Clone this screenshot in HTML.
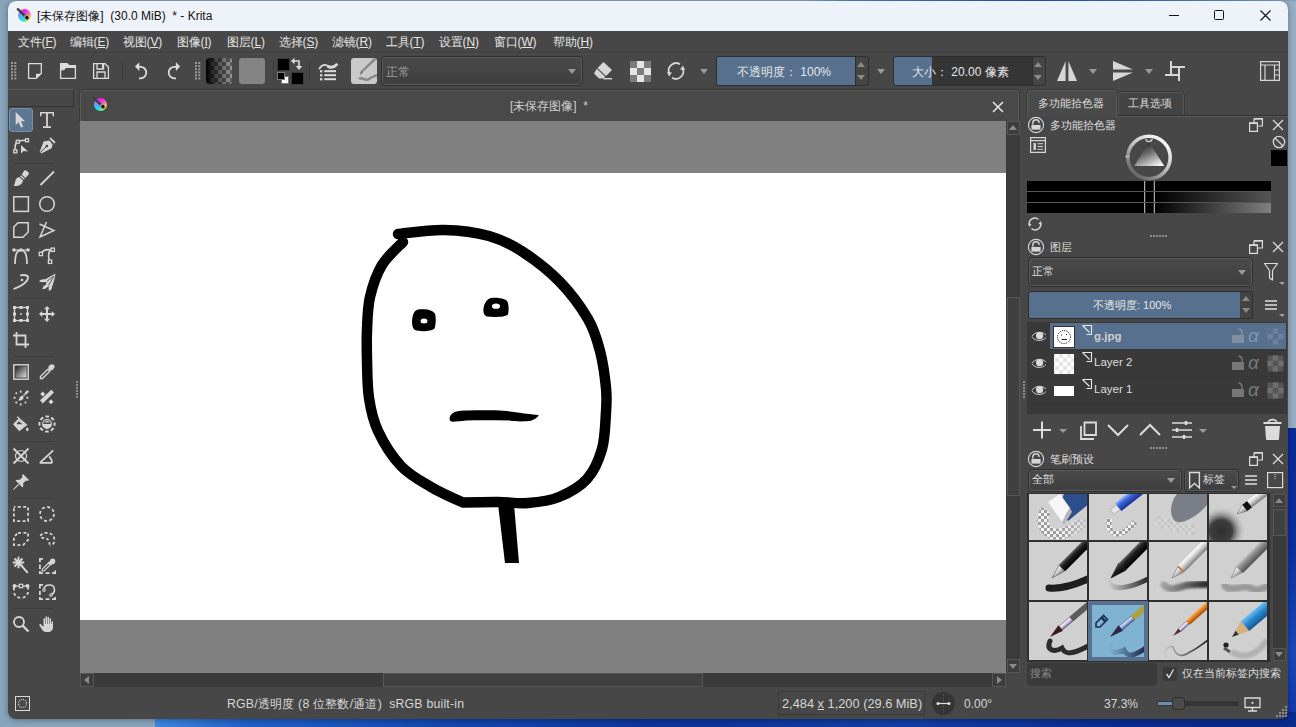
<!DOCTYPE html>
<html><head><meta charset="utf-8">
<style>
*{box-sizing:border-box;margin:0;padding:0}
html,body{width:1296px;height:727px;overflow:hidden}
body{position:relative;font-family:"Liberation Sans",sans-serif;font-size:12px;color:#dcdcdc;background:#8eabc6}
.a{position:absolute}
svg{position:absolute;overflow:visible}
.mi{position:absolute;top:34px;font-size:12px;color:#e4e4e4;white-space:nowrap;letter-spacing:-0.2px}
.ic{fill:none;stroke:#d8d8d8;stroke-width:1.5}
.icf{fill:#d8d8d8;stroke:none}
.sep{position:absolute;width:1px;background:#3d3d3d}
.combo{position:absolute;border:1px solid #2e2e2e;border-radius:4px;background:linear-gradient(#4a4a4a,#3e3e3e);box-shadow:inset 0 0 0 1px #5a5a5a}
.tri{position:absolute;width:0;height:0;border-left:4px solid transparent;border-right:4px solid transparent;border-top:5px solid #9a9a9a}
.triu{position:absolute;width:0;height:0;border-left:4px solid transparent;border-right:4px solid transparent;border-bottom:5px solid #9a9a9a}
.txt{position:absolute;white-space:nowrap;color:#dedede;font-size:12px}
</style></head><body>
<!-- wallpaper bloom -->
<div class="a" style="left:0;top:0;width:1296px;height:727px;background:linear-gradient(90deg,#88a5bc 0%,#8fa9c0 50%,#98afc5 100%)"></div>
<div class="a" style="left:1230px;top:428px;width:80px;height:300px;background:linear-gradient(180deg,#0a2a98 0%,#0c2f9e 40%,#1a48b8 75%,#0e35a6 100%)"></div>
<div class="a" style="left:155px;top:712px;width:1141px;height:20px;background:linear-gradient(90deg,#3c88e0 0%,#1f62c8 8%,#1248b0 25%,#0c349a 45%,#123ea6 65%,#0a2c90 85%,#0a2a8c 100%)"></div>
<div class="a" style="left:0;top:0;width:1296px;height:1px;background:linear-gradient(90deg,#8aa3bb 0%,#8aa3bb 62%,#3f86d0 66%,#1a5ab8 80%,#3a7acc 90%,#8aa3bb 100%)"></div>
<!-- window -->
<div class="a" style="left:8px;top:1px;width:1280px;height:718px;background:#474747;border-radius:8px;overflow:hidden;box-shadow:0 1px 6px rgba(0,0,0,0.35)">
  <div class="a" style="left:0;top:0;width:1280px;height:30px;background:#eef2f9"></div>
</div>
<!-- title -->
<div class="a" style="left:17.5px;top:8.5px;width:13px;height:13px;border-radius:50%;background:radial-gradient(circle at 45% 60%,rgba(90,150,240,0.85) 0%,rgba(90,150,240,0.3) 35%,rgba(90,150,240,0) 60%),conic-gradient(from 0deg,#ff10f0 0deg,#ff50c0 50deg,#ff9a70 85deg,#ffe030 125deg,#c0ff40 150deg,#40ffa0 185deg,#10f8ff 220deg,#70a0ff 270deg,#b060ff 310deg,#ff10f0 360deg)"></div>
<svg style="left:17px;top:8px" width="14" height="14" viewBox="0 0 14 14"><path d="M0.8 1.2 L8.5 8.3" stroke="#3c3c3c" stroke-width="2.4" stroke-linecap="round"/><path d="M7.6 7.5 L9.2 9" stroke="#aaa" stroke-width="2"/><ellipse cx="10" cy="9.7" rx="1.6" ry="1.9" transform="rotate(-40 10 9.7)" fill="#111"/></svg>
<div class="txt" style="left:37px;top:8px;color:#111;font-size:12px">[未保存图像]&nbsp; (30.0 MiB)&nbsp; * - Krita</div>
<svg style="left:1169px;top:15px" width="10" height="1"><rect x="0" y="0" width="10" height="1" fill="#111"/></svg>
<div class="a" style="left:1214px;top:10px;width:10px;height:10px;border:1px solid #111;border-radius:1.5px"></div>
<svg style="left:1259.5px;top:9.5px" width="11" height="11" viewBox="0 0 11 11"><path d="M0.5 0.5 L10.5 10.5 M10.5 0.5 L0.5 10.5" stroke="#111" stroke-width="1.1"/></svg>
<!-- menu -->
<span class="mi" style="left:18px">文件(<u>F</u>)</span>
<span class="mi" style="left:70px">编辑(<u>E</u>)</span>
<span class="mi" style="left:123px">视图(<u>V</u>)</span>
<span class="mi" style="left:177px">图像(<u>I</u>)</span>
<span class="mi" style="left:227px">图层(<u>L</u>)</span>
<span class="mi" style="left:279px">选择(<u>S</u>)</span>
<span class="mi" style="left:332px">滤镜(<u>R</u>)</span>
<span class="mi" style="left:386px">工具(<u>T</u>)</span>
<span class="mi" style="left:439px">设置(<u>N</u>)</span>
<span class="mi" style="left:494px">窗口(<u>W</u>)</span>
<span class="mi" style="left:553px">帮助(<u>H</u>)</span>
<div class="a" style="left:8px;top:52px;width:1280px;height:1px;background:#3e3e3e"></div>
<div class="a" style="left:8px;top:53px;width:1280px;height:1px;background:#4c4c4c"></div>

<!-- toolbar -->
<svg style="left:0;top:0" width="1296" height="90">
 <g fill="#9a9a9a">
  <rect x="11" y="62" width="2" height="2"/><rect x="14.3" y="62" width="2" height="2"/>
  <rect x="11" y="65.1" width="2" height="2"/><rect x="14.3" y="65.1" width="2" height="2"/>
  <rect x="11" y="68.2" width="2" height="2"/><rect x="14.3" y="68.2" width="2" height="2"/>
  <rect x="11" y="71.3" width="2" height="2"/><rect x="14.3" y="71.3" width="2" height="2"/>
  <rect x="11" y="74.4" width="2" height="2"/><rect x="14.3" y="74.4" width="2" height="2"/>
  <rect x="11" y="77.5" width="2" height="2"/><rect x="14.3" y="77.5" width="2" height="2"/>
  <rect x="195" y="62" width="2" height="2"/><rect x="198.3" y="62" width="2" height="2"/>
  <rect x="195" y="65.1" width="2" height="2"/><rect x="198.3" y="65.1" width="2" height="2"/>
  <rect x="195" y="68.2" width="2" height="2"/><rect x="198.3" y="68.2" width="2" height="2"/>
  <rect x="195" y="71.3" width="2" height="2"/><rect x="198.3" y="71.3" width="2" height="2"/>
  <rect x="195" y="74.4" width="2" height="2"/><rect x="198.3" y="74.4" width="2" height="2"/>
  <rect x="195" y="77.5" width="2" height="2"/><rect x="198.3" y="77.5" width="2" height="2"/>
 </g>
 <g fill="none" stroke="#dcdcdc" stroke-width="1.3">
  <!-- new -->
  <path d="M28.6 63.6 H41.3 V73.5 L36 78.4 H28.6 Z"/>
  <!-- open -->
  <path d="M60.6 63.6 H67 L69 65.6 H75.4 V78.4 H60.6 Z"/>
  <!-- save -->
  <path d="M93.6 63.6 H105 L108.4 67 V78.4 H93.6 Z M97 63.6 V69 H103.6 V63.6 M97 78.4 V72 H105 V78.4"/>
 </g>
 <path d="M36 78.4 V73.8 H41.3 Z" fill="#dcdcdc"/>
 <path d="M60.6 63.6 H67 L69 65.6 H75.4 V68 H66 L64 70.2 H60.6 Z" fill="#dcdcdc"/>
 <rect x="102" y="64" width="2" height="4.5" fill="#dcdcdc"/>
 <!-- undo/redo -->
 <g fill="none" stroke="#dcdcdc" stroke-width="1.8">
  <path d="M138 66.8 H140.5 A5.8 5.8 0 0 1 140.5 78.4 H139"/>
  <path d="M177 66.8 H174.5 A5.8 5.8 0 0 0 174.5 78.4 H176"/>
 </g>
 <path d="M135 66.6 L139.3 62.3 V70.9 Z" fill="#dcdcdc"/>
 <path d="M180.2 66.6 L175.9 62.3 V70.9 Z" fill="#dcdcdc"/>
 <rect x="122" y="61" width="1" height="20" fill="#3c3c3c"/>
 <rect x="273" y="61" width="1" height="20" fill="#3c3c3c"/>
 <rect x="309" y="61" width="1" height="20" fill="#3c3c3c"/>
</svg>
<!-- gradient swatch -->
<div class="a" style="left:206px;top:58px;width:26px;height:26px;border-radius:3px;overflow:hidden;background-color:#9a9a9a;background-image:linear-gradient(45deg,#5a5a5a 25%,transparent 25%,transparent 75%,#5a5a5a 75%),linear-gradient(45deg,#5a5a5a 25%,transparent 25%,transparent 75%,#5a5a5a 75%);background-size:8px 8px;background-position:0 0,4px 4px">
 <div class="a" style="left:0;top:0;width:26px;height:26px;background:linear-gradient(90deg,#000 0%,rgba(0,0,0,0.6) 35%,rgba(0,0,0,0) 100%)"></div>
</div>
<div class="a" style="left:239px;top:58px;width:26px;height:26px;border-radius:3px;background:#848484"></div>
<!-- fg/bg -->
<div class="a" style="left:277px;top:58px;width:13px;height:13px;background:#000;border:1px solid #3a3a3a"></div>
<div class="a" style="left:291px;top:72px;width:13px;height:13px;background:#000;border:1px solid #3a3a3a"></div>
<div class="a" style="left:281px;top:76px;width:8px;height:8px;background:#fff;border:1px solid #777"></div>
<div class="a" style="left:277px;top:72px;width:8px;height:8px;background:#000;border:1px solid #777"></div>
<svg style="left:290px;top:57px" width="14" height="14" viewBox="0 0 14 14">
 <path d="M3 4 H9 V9" fill="none" stroke="#dcdcdc" stroke-width="1.6"/>
 <path d="M1 4 L4.5 0.8 V7.2 Z M9 13 L5.8 9 H12.2 Z" fill="#dcdcdc"/>
</svg>
<!-- brush settings icon -->
<svg style="left:317px;top:61px" width="22" height="20" viewBox="0 0 22 20">
 <path d="M2.5 7.5 C5 3.8 7.5 3 10.5 4.8 C13 6.3 16 6.8 19.5 3.5" fill="none" stroke="#d8d8d8" stroke-width="1.8" stroke-linecap="round"/>
 <path d="M11.5 5.6 C14 6.8 16.8 6.6 19.5 3.8" fill="none" stroke="#d8d8d8" stroke-width="3" stroke-linecap="round"/>
 <g fill="#dcdcdc"><rect x="3" y="9.2" width="2.4" height="2.2"/><rect x="7.3" y="9.2" width="11.7" height="2"/>
 <rect x="3" y="13.2" width="2.4" height="2.2"/><rect x="7.3" y="13.2" width="11.7" height="2"/>
 <rect x="3" y="17.2" width="2.4" height="2.2"/><rect x="7.3" y="17.2" width="11.7" height="2"/></g>
</svg>
<div class="a" style="left:351px;top:58px;width:26px;height:26px;border-radius:3px;background:#c9c9c9;overflow:hidden">
 <svg style="left:0;top:0" width="26" height="26" viewBox="0 0 26 26">
  <path d="M26 1 L12 14 L10 13 L24 -1 Z" fill="#8a8a8a"/>
  <path d="M12 14 L9 17 L10 13 Z" fill="#555"/>
  <path d="M8 21 C11 18 14 24 18 21 C21 19 24 18 26 17" fill="none" stroke="#888" stroke-width="2.5"/>
 </svg>
</div>
<!-- blend combo -->
<div class="combo" style="left:381px;top:56px;width:202px;height:30px"></div>
<div class="txt" style="left:386px;top:64px;color:#9a9a9a">正常</div>
<div class="tri" style="left:568px;top:69px"></div>
<!-- eraser -->
<svg style="left:593px;top:61px" width="22" height="20" viewBox="0 0 22 20">
 <path d="M10.5 1 L19 9 L13 15 L4.5 7 Z" fill="#d6d6d6"/>
 <path d="M3.8 7.8 L12.2 15.8 L10.8 17.4 H6 L1 12.5 Z" fill="#d6d6d6"/>
 <rect x="10.5" y="17" width="8.5" height="1.4" fill="#d6d6d6"/>
</svg>
<!-- alpha checker -->
<div class="a" style="left:630px;top:61px;width:21px;height:21px;background:#e6e6e6">
 <div class="a" style="left:0;top:0;width:7px;height:7px;background:#7c7c7c"></div>
 <div class="a" style="left:14px;top:0;width:7px;height:7px;background:#7c7c7c"></div>
 <div class="a" style="left:7px;top:7px;width:7px;height:7px;background:#7c7c7c"></div>
 <div class="a" style="left:0;top:14px;width:7px;height:7px;background:#7c7c7c"></div>
 <div class="a" style="left:14px;top:14px;width:7px;height:7px;background:#7c7c7c"></div>
</div>
<!-- reload -->
<svg style="left:666px;top:61px" width="20" height="20" viewBox="0 0 20 20">
 <path d="M3.5 13 A7.5 7.5 0 0 1 14 3.2" fill="none" stroke="#d6d6d6" stroke-width="1.8"/>
 <path d="M16.5 7 A7.5 7.5 0 0 1 6 16.8" fill="none" stroke="#d6d6d6" stroke-width="1.8"/>
 <path d="M1 11 L6 11.5 L3 15.5 Z M19 9 L14 8.5 L17 4.5 Z" fill="#d6d6d6"/>
</svg>
<div class="tri" style="left:700px;top:69px"></div>
<!-- opacity slider -->
<div class="a" style="left:716px;top:56px;width:153px;height:30px;border:1px solid #2e2e2e;border-radius:3px;background:#3a3a3a;overflow:hidden">
 <div class="a" style="left:0;top:0;width:138px;height:28px;background:#56708e"></div>
 <div class="a" style="left:138px;top:0;width:14px;height:28px;background:#454545;border-left:1px solid #2e2e2e"></div>
</div>
<div class="triu" style="left:857px;top:62px;border-bottom-color:#8a8a8a"></div>
<div class="tri" style="left:857px;top:75px;border-top-color:#8a8a8a"></div>
<div class="txt" style="left:737px;top:64px;color:#e6e6e6">不透明度：&nbsp;100%</div>
<div class="tri" style="left:877px;top:69px"></div>
<!-- size slider -->
<div class="a" style="left:893px;top:56px;width:153px;height:30px;border:1px solid #2e2e2e;border-radius:3px;background:#353535;overflow:hidden">
 <div class="a" style="left:0;top:0;width:38px;height:28px;background:#56708e"></div>
 <div class="a" style="left:138px;top:0;width:14px;height:28px;background:#454545;border-left:1px solid #2e2e2e"></div>
</div>
<div class="triu" style="left:1034px;top:62px;border-bottom-color:#8a8a8a"></div>
<div class="tri" style="left:1034px;top:75px;border-top-color:#8a8a8a"></div>
<div class="txt" style="left:912px;top:64px;color:#e6e6e6">大小：&nbsp;20.00 像素</div>
<!-- mirror -->
<svg style="left:1056px;top:60px" width="22" height="22" viewBox="0 0 22 22">
 <path d="M9.6 1 V21 H1 Z M12.4 1 V21 H21 Z" fill="#d6d6d6"/>
</svg>
<div class="tri" style="left:1089px;top:69px"></div>
<svg style="left:1112px;top:60px" width="22" height="22" viewBox="0 0 22 22">
 <path d="M1 1 L21 9.6 H1 Z M1 12.4 H21 L1 21 Z" fill="#d6d6d6"/>
</svg>
<div class="tri" style="left:1145px;top:69px"></div>
<!-- wrap -->
<svg style="left:1164px;top:60px" width="22" height="22" viewBox="0 0 22 22">
 <path d="M7 1 V15 M7 7 H21 M1 15 H15 M15 7 V21" fill="none" stroke="#d6d6d6" stroke-width="2"/>
</svg>
<!-- workspace -->
<svg style="left:1259px;top:60px" width="22" height="22" viewBox="0 0 22 22">
 <path d="M1.6 1.6 H20.4 V20.4 H1.6 Z M1.6 5 H20.4 M6 5 V20.4 M15.5 5 V20.4 M15.5 10 H20.4 M15.5 15 H20.4" fill="none" stroke="#d6d6d6" stroke-width="1.2"/>
</svg>
<!-- toolbox -->
<div class="a" style="left:8px;top:89px;width:66px;height:18px;border-top:1px solid #585858;border-right:1px solid #333;border-bottom:1px solid #333;background:#474747"></div>
<div class="a" style="left:9px;top:108px;width:24px;height:24px;border-radius:3px;background:#5d7793;border:1px solid #7590ab"></div>
<svg style="left:0;top:0" width="80" height="640">
 <g fill="#3c3c3c">
  <rect x="14" y="163" width="40" height="1"/><rect x="14" y="298" width="40" height="1"/>
  <rect x="14" y="356" width="40" height="1"/><rect x="14" y="441" width="40" height="1"/>
  <rect x="14" y="498" width="40" height="1"/><rect x="14" y="608" width="40" height="1"/>
 </g>
 <g fill="#8c8c8c"><rect x="76" y="381" width="2" height="2"/><rect x="76" y="384" width="2" height="2"/><rect x="76" y="387" width="2" height="2"/><rect x="76" y="390" width="2" height="2"/><rect x="76" y="393" width="2" height="2"/><rect x="76" y="396" width="2" height="2"/></g>
 <g fill="#d6d6d6" stroke="none">
  <!-- select arrow -->
  <path transform="translate(13,112)" d="M2.7 0 V13 L5.6 10.2 L8 15.6 L10.3 14.6 L7.9 9.3 H12 Z"/>
  <!-- T -->
  <path transform="translate(39,112)" d="M1 0 H15 V4.2 H13.6 V1.6 H8.9 V14.3 H12 V16 H4 V14.3 H7.1 V1.6 H2.4 V4.2 H1 Z"/>
  <!-- brush -->
  <path transform="translate(13,170)" d="M11.5 0.2 C13 -0.3 16.5 2.5 16 4 L12.5 8 L8.7 4.5 Z M8 5.3 L11.8 8.8 L10.8 9.8 L7 6.3 Z M6.3 7 L10 10.5 C9.5 14 6 16.5 0.5 16 C2.5 14.5 1.5 11 3.5 8.6 C4.4 7.6 5.3 7.2 6.3 7 Z"/>
  <!-- multibrush -->
  <path d="M55.5 273.5 L54.5 279 L52.3 286.5 L50 286 L47.5 287 L45.8 285.5 L46.5 282.5 L44.8 281.5 L44.5 279.8 Z"/>
  <path d="M47 281.3 L53.8 276 M48.3 285.5 L53.8 276.5" stroke="#474747" stroke-width="0.9" fill="none"/>
  <path d="M45.5 279.6 C43.5 278.6 40.5 279.3 39 281.3 C41.5 282.5 44 282.6 46 281.6 Z"/>
  <path d="M46.5 284.8 C44.3 285 42.8 286.5 42.3 289.3 C44.8 289.2 46.8 288.2 47.8 286.2 Z"/>
  <path d="M50 285.6 C48.5 286.5 48.2 288.8 49.2 291 C51 290.2 52.3 288.3 52 286.2 Z"/>
  <!-- move arrows -->
  <path transform="translate(39,306)" d="M8 0 L11 3.2 H9 V7 H12.8 V5 L16 8 L12.8 11 V9 H9 V12.8 H11 L8 16 L5 12.8 H7 V9 H3.2 V11 L0 8 L3.2 5 V7 H7 V3.2 H5 Z"/>
  <!-- pin -->
  <path transform="translate(13,474)" d="M10 0 L16 6 L14.5 7 L13 6.5 L10 9.5 C10.5 11 10.5 12.5 9.5 13.5 L2.5 6.5 C3.5 5.5 5 5.5 6.5 6 L9.5 3 L9 1.5 Z M5 10 L6 11 L0.5 16 L0 15.5 Z"/>
  <!-- hand -->
  <path transform="translate(39,616)" d="M4.5 3 C4.5 2 6 2 6 3 V8 H6.5 V1 C6.5 0 8 0 8 1 V8 H8.5 V1.5 C8.5 0.5 10 0.5 10 1.5 V8 H10.5 V3 C10.5 2 12 2 12 3 V8 H12.5 V6 C12.5 5 14 5 14 6 V11 C14 14 12 16 9 16 H7 C5 16 4 15 3 13.5 L0.5 9.5 C0 8.5 1 7.5 2 8.5 L4.5 11 Z"/>
 </g>
 <g fill="none" stroke="#d6d6d6" stroke-width="1.5">
  <!-- edit shapes -->
  <path transform="translate(13,138)" d="M2 13 C2 8 2 4.5 5 3.5 C8 2.5 11 2.3 13.5 2.3"/>
  <rect transform="translate(13,138)" x="0.8" y="11.8" width="3" height="3" fill="#474747" stroke-width="1.3"/>
  <rect transform="translate(13,138)" x="3.3" y="2.2" width="3" height="3" fill="#474747" stroke-width="1.3"/>
  <rect transform="translate(13,138)" x="12.5" y="0.8" width="3" height="3" fill="#474747" stroke-width="1.3"/>
  <path transform="translate(13,138)" d="M8 7 V15.5 L10.5 13 L15 13.5 Z" fill="#d6d6d6" stroke="none"/>
  <!-- line -->
  <path d="M40.5 185 L54 171.5" stroke-width="1.8"/>
  <!-- rect -->
  <rect x="13.8" y="196.8" width="14.6" height="14.6"/>
  <!-- ellipse -->
  <circle cx="47" cy="204" r="7.3"/>
  <!-- polygon -->
  <path transform="translate(13,222)" d="M5 0.8 H15.2 V10 L10 15.2 H0.8 V5 Z"/>
  <!-- polyline -->
  <path transform="translate(39,222)" d="M0.5 2 L15 8.5 L1 15 L7.5 0"/>
  <!-- bezier -->
  <path transform="translate(13,248)" d="M2 16 C2 6 4 2 8 2 C12 2 14 6 14 16" stroke-width="1.8"/>
  <path transform="translate(13,248)" d="M0 2 H16" stroke-width="1"/>
  <circle cx="14" cy="250" r="1.8" fill="#d6d6d6" stroke="none"/><circle cx="21" cy="250" r="1.8" fill="#d6d6d6" stroke="none"/><circle cx="28" cy="250" r="1.8" fill="#d6d6d6" stroke="none"/>
  <!-- freehand path -->
  <path d="M40.8 253.9 C42.5 250.5 46.5 249.2 50.5 249.8 C48.2 252.5 47.8 257.5 50.1 261.8" stroke-width="1.6"/>
  <rect x="39.2" y="252.3" width="3.3" height="3.3" fill="#474747" stroke-width="1.3"/>
  <rect x="51.1" y="248.1" width="3.3" height="3.3" fill="#474747" stroke-width="1.3"/>
  <rect x="48.4" y="260.1" width="3.3" height="3.3" fill="#474747" stroke-width="1.3"/>
  <!-- freehand (col1,282) -->
  <path transform="translate(13,274)" d="M0.5 15 C6 13.5 14 9 15 4 C15.5 1 11 0.5 7 1.5" stroke-width="1.8"/>
  <circle cx="22" cy="280" r="1.3" fill="#d6d6d6" stroke="none"/>
  <!-- transform -->
  <rect x="14.5" y="307.5" width="13" height="13" stroke-width="1.3"/>
  <circle cx="21" cy="314" r="1" fill="#d6d6d6" stroke="none"/>
  <g fill="#d6d6d6" stroke="none"><rect x="13" y="306" width="3" height="3"/><rect x="19.5" y="306" width="3" height="3"/><rect x="26" y="306" width="3" height="3"/><rect x="13" y="312.5" width="3" height="3"/><rect x="26" y="312.5" width="3" height="3"/><rect x="13" y="319" width="3" height="3"/><rect x="19.5" y="319" width="3" height="3"/><rect x="26" y="319" width="3" height="3"/></g>
  <!-- crop -->
  <path transform="translate(13,332)" d="M3.5 0 V12.5 H16 M0 3.5 H12.5 V16" stroke-width="1.8"/>
  <!-- gradient -->
  <rect x="13.8" y="364.8" width="14.4" height="14.4" stroke-width="1.4"/>
  <!-- color picker -->
  <path transform="translate(39,364)" d="M9 5 L1.5 12.5 V14.5 H3.5 L11 7" stroke-width="1.4"/>
  <path transform="translate(39,364)" d="M8.3 5.5 L10.5 7.7 L12 6.2 C13 6.5 14 6 14.2 5 L15.2 4 C16 3 15.5 1 14.5 0.8 C13.5 0 12 0 11 1 L9.8 2.2 C9 2.5 9 3.5 9.8 4 Z" fill="#d6d6d6" stroke="none"/>
  <!-- assistant -->
  <circle cx="21" cy="456" r="5.5" stroke-width="1.2"/>
  <path d="M13.5 448.5 L28.5 463.5 M28.5 448.5 L13.5 463.5" stroke-width="1.8"/>
  <!-- measure -->
  <path d="M39.8 462.8 L53.2 450.3 M39.8 462.8 H52.2 M49.2 456.3 C51 458.3 52.1 460.5 52.2 462.8" stroke-width="1.8"/>
  <!-- selections -->
  <rect x="13.9" y="506.9" width="14.2" height="14.2" stroke-width="1.8" stroke-dasharray="3 2.4" stroke-dashoffset="1.5"/>
  <circle cx="47" cy="514" r="7" stroke-width="1.8" stroke-dasharray="3 2.5"/>
  <path d="M18 532.9 H28.1 V540 L23 545.1 H13.9 V537 Z" stroke-width="1.8" stroke-dasharray="3 2.4"/>
  <path d="M40.5 536 C42 533 46 532 50 533.5 C54 535 55 539 54 542.5 C53.3 544.5 51.5 545.5 50.5 545.8" stroke-width="1.8" stroke-dasharray="3 2.2"/>
  <path d="M41.5 538 C44.5 537.5 48 538.5 49 541 C49.8 543 49.5 544.5 48.8 545.5" stroke-width="1.8" stroke-dasharray="2.6 2.2"/>
  <path d="M19.5 563.5 L27.8 572.8" stroke-width="2"/>
  <path d="M18.5 556.8 V568.2 M12.8 562.5 H24.2 M14.5 558.5 L22.5 566.5 M22.5 558.5 L14.5 566.5" stroke-width="2"/>
  <path d="M39.9 562 V558.9 H43 M39.9 564.5 V569 M39.9 571 V573.1 H43 M45.5 573.1 H49.5 M52 573.1 H55.1 V570.5" stroke-width="1.8"/>
  <path d="M48.5 563 L42.3 569.2 V571 H44 L50.3 564.7 Z" stroke-width="1.2"/>
  <path d="M47.8 562.2 L51 565.4 L52.2 564.2 C53.3 564.4 54.3 564 54.8 563 C55.6 561.8 55.5 560 54.5 559.2 C53.5 558.3 52 558.3 51 559 C50.2 559.5 49.9 560.5 50 561.2 Z" fill="#d6d6d6" stroke="none"/>
  <path d="M13.9 587.5 V591 C13.9 595 16.8 597.9 21 597.9 C25.2 597.9 28.1 595 28.1 591 V587.5" stroke-width="1.8" stroke-dasharray="3 2.4"/>
  <path d="M13.5 586 H28.5" stroke-width="1.3"/>
  <circle cx="14.5" cy="586" r="2" fill="#d6d6d6" stroke="none"/><circle cx="27.5" cy="586" r="2" fill="#d6d6d6" stroke="none"/><rect x="19.3" y="584.3" width="3.4" height="3.4" fill="#474747" stroke-width="1.2"/>
  <path d="M39.9 588.5 V584.9 H43 M39.9 591 V595 M39.9 597 V599.1 H43 M45.5 599.1 H49.5 M52 599.1 H55.1 V597" stroke-width="1.8"/>
  <path d="M44 590 C44 586.5 46.5 585 49.5 585 C52.5 585 54.5 587 54.5 590 C54.5 592.5 53 594 51 595" stroke-width="1.6"/>
  <circle cx="44" cy="590" r="1.3" fill="#474747" stroke-width="1.1"/><circle cx="51" cy="595" r="1.3" fill="#474747" stroke-width="1.1"/>
  <!-- zoom -->
  <circle cx="19" cy="622" r="5" stroke-width="1.8"/>
  <path d="M22.5 625.5 L28.5 631.5" stroke-width="2.4"/>
 </g>
 <!-- pen nib -->
 <path d="M39.6 152 L43.6 141.6 L49.3 140.4 L52.6 144.4 L51.6 148.3 L41.3 153.6 Z" fill="#d6d6d6"/>
 <path d="M40.3 152.6 L46.6 146.3" stroke="#474747" stroke-width="1"/>
 <circle cx="46.8" cy="146.1" r="1.35" fill="#474747"/>
 <path d="M50.6 138.6 L54.4 142.3" stroke="#d6d6d6" stroke-width="1.9" stroke-linecap="round"/>
 <!-- gradient fill -->
 <defs><linearGradient id="tg" x1="0" y1="0" x2="1" y2="1"><stop offset="0" stop-color="#222"/><stop offset="1" stop-color="#e0e0e0"/></linearGradient></defs>
 <rect x="15.5" y="366.5" width="11" height="11" fill="url(#tg)"/>
 <!-- enclose fill inner half -->
 <g fill="#d6d6d6">
  <!-- colorize -->
  <path d="M27.5 390.2 C28.8 390.5 29 391.8 28.3 392.6 L25.6 395 L24.2 393.6 L26.3 391 C26.7 390.5 27 390.2 27.5 390.2 Z"/>
  <path d="M23.8 394 L25.2 395.4 L24.3 396.3 L22.9 394.9 Z"/>
  <path d="M22.3 395.4 L23.8 396.9 C23.5 399.5 21.5 400.8 18 400.5 C19.2 399.6 19.3 398.5 19.7 397.5 C20.2 396.3 21.2 395.6 22.3 395.4 Z"/>
  <rect x="19.8" y="390.6" width="1.8" height="2"/><rect x="13.6" y="396.8" width="2" height="1.8"/><rect x="26.4" y="396.8" width="2" height="1.8"/><rect x="19.8" y="403.4" width="1.8" height="2"/>
  <rect x="15.4" y="392.3" width="1.8" height="1.8" transform="rotate(45 16.3 393.2)"/><rect x="15.4" y="401.6" width="1.8" height="1.8" transform="rotate(45 16.3 402.5)"/><rect x="24.6" y="401.6" width="1.8" height="1.8" transform="rotate(45 25.5 402.5)"/>
  <!-- smart patch -->
  <path d="M40 400.3 L51.3 389.7 L54 392.4 L42.7 403.6 Z"/>
  <path d="M42.7 391.4 L45.2 393.9 L42.7 396.4 L40.2 393.9 Z M51 399.3 L53.5 401.8 L51 404.3 L48.5 401.8 Z"/>
  <!-- fill bucket -->
  <path d="M13 424.2 L18.3 418.8 L26.4 425.6 L19.4 431.2 Z"/>
  <path d="M16.4 424.2 L18.6 421.3 L22.6 424.2 Z" fill="#474747"/>
  <path d="M17.2 416.8 L27 425.6" stroke="#d6d6d6" stroke-width="1.3"/>
  <ellipse cx="27.3" cy="429.3" rx="1.2" ry="1.9"/>
 </g>
 <!-- enclose -->
 <circle cx="47" cy="424" r="7.6" fill="none" stroke="#d6d6d6" stroke-width="2" stroke-dasharray="3.6 2.37" stroke-dashoffset="1.8"/>
 <circle cx="47" cy="424" r="4.3" fill="none" stroke="#d6d6d6" stroke-width="1.2"/>
 <path d="M42.7 424 H51.3 A4.3 4.3 0 0 1 42.7 424 Z" fill="#d6d6d6"/>
 <path d="M44.5 422.5 A2.6 2.2 0 0 1 49.5 422.5 Z" fill="#d6d6d6"/>
</svg>
<!-- document area -->
<div class="a" style="left:80px;top:90px;width:939px;height:32px;background:#494949;border:1px solid #5a5a5a;border-bottom:none;border-radius:4px 4px 0 0;box-shadow:0 -1px 0 0 #353535,-1px 0 0 0 #3a3a3a,1px 0 0 0 #3a3a3a"></div>
<div class="a" style="left:93.5px;top:97.5px;width:13px;height:13px;border-radius:50%;background:radial-gradient(circle at 45% 60%,rgba(90,150,240,0.85) 0%,rgba(90,150,240,0.3) 35%,rgba(90,150,240,0) 60%),conic-gradient(from 0deg,#ff10f0 0deg,#ff50c0 50deg,#ff9a70 85deg,#ffe030 125deg,#c0ff40 150deg,#40ffa0 185deg,#10f8ff 220deg,#70a0ff 270deg,#b060ff 310deg,#ff10f0 360deg)"></div>
<svg style="left:93px;top:97px" width="14" height="14" viewBox="0 0 14 14"><path d="M0.8 1.2 L8.5 8.3" stroke="#3c3c3c" stroke-width="2.4" stroke-linecap="round"/><path d="M7.6 7.5 L9.2 9" stroke="#aaa" stroke-width="2"/><ellipse cx="10" cy="9.7" rx="1.6" ry="1.9" transform="rotate(-40 10 9.7)" fill="#111"/></svg>
<div class="txt" style="left:510px;top:98px;color:#cfcfcf">[未保存图像]&nbsp; *</div>
<svg style="left:991.5px;top:100.5px" width="12" height="12" viewBox="0 0 12 12"><path d="M1 1 L11 11 M11 1 L1 11" stroke="#e4e4e4" stroke-width="1.6"/></svg>
<div class="a" style="left:80px;top:121px;width:926px;height:552px;background:#808080"></div>
<div class="a" style="left:80px;top:173px;width:926px;height:447px;background:#fff"></div>
<!-- face -->
<svg style="left:80px;top:173px" width="926" height="447" viewBox="80 173 926 447">
 <g fill="none" stroke="#000" stroke-linecap="round" stroke-linejoin="round">
  <path d="M398 234 C405.7 233.3 428.8 229.7 444 230 C459.2 230.3 475.8 232.3 489 236 C502.2 239.7 511.2 244.3 523 252 C534.8 259.7 549.2 270.8 560 282 C570.8 293.2 581.3 307.5 588 319 C594.7 330.5 597.0 339.5 600 351 C603.0 362.5 605.0 377.8 606 388 C607.0 398.2 606.7 401.8 606 412 C605.3 422.2 605.2 437.8 602 449 C598.8 460.2 594.2 471.0 587 479 C579.8 487.0 568.8 493.0 559 497 C549.2 501.0 538.2 502.2 528 503 C517.8 503.8 508.8 502.1 498 502 C487.2 501.9 463.0 502.5 463 502.5 C463.0 502.5 441.3 493.1 431 487 C420.7 480.9 409.8 475.3 401 466 C392.2 456.7 383.3 442.3 378 431 C372.7 419.7 370.8 409.8 369 398 C367.2 386.2 367.3 371.3 367 360 C366.7 348.7 366.5 340.5 367 330 C367.5 319.5 367.5 307.8 370 297 C372.5 286.2 376.5 274.2 382 265 C387.5 255.8 399.5 245.8 403 242" stroke-linejoin="miter" stroke-width="10.5"/>
 </g>
 <path d="M450 416.5 C452 412.5 456 411 464 410.6 C480 410.2 495 410.2 503 410.8 C510 411.4 516 412.5 524 413.5 C532 414.3 536 414.6 538.8 415.3 C536.5 418.5 533 421 527 421.3 C520 421.6 514 421.5 509.5 420.6 C495 420.3 480 420 466 420.5 C460 421.2 455 421.8 451 421.6 C449.3 420.5 449.3 418 450 416.5 Z" fill="#000"/>
 <path d="M498 504 L514 504 L519 563 L505 563 Z" fill="#000"/>
 <path fill-rule="evenodd" fill="#000" d="M418 309.5 C425 308.5 433 309.5 435.2 314 C436 318 436 325 434.5 328.5 C431 331.5 420 332 415 330 C411.5 328 411.5 320 413 315 C414 312 415.5 310 418 309.5 Z M420.5 321 A3.5 2.5 0 1 0 427.5 321 A3.5 2.5 0 1 0 420.5 321 Z"/>
 <path fill-rule="evenodd" fill="#000" d="M491 298 C497 297.5 504 298 507 301 C509 304 509 311 508 314.5 C506 317 494 317.5 487 316.5 C484 315.5 483 312 483.5 308.5 C484 304 486.5 299 491 298 Z M492 306.2 A4 2.6 0 1 0 500 306.2 A4 2.6 0 1 0 492 306.2 Z"/>
</svg>
<!-- v scrollbar -->
<div class="a" style="left:1006px;top:121px;width:14px;height:552px;background:#3b3b3b"></div>
<div class="a" style="left:1007px;top:121px;width:13px;height:14px;border:1px solid #565656;background:#3d3d3d"></div>
<div class="triu" style="left:1009px;top:125px;border-bottom-color:#8a8a8a"></div>
<div class="a" style="left:1007px;top:297px;width:13px;height:199px;border:1px solid #565656;background:#404040"></div>
<div class="a" style="left:1007px;top:659px;width:13px;height:14px;border:1px solid #565656;background:#3d3d3d"></div>
<div class="tri" style="left:1009px;top:664px;border-top-color:#8a8a8a"></div>
<!-- h scrollbar -->
<div class="a" style="left:80px;top:673px;width:926px;height:14px;background:#3b3b3b"></div>
<div class="a" style="left:80px;top:673px;width:14px;height:14px;border:1px solid #565656;background:#3d3d3d"></div>
<div style="position:absolute;left:84px;top:676px;width:0;height:0;border-top:4px solid transparent;border-bottom:4px solid transparent;border-right:5px solid #8a8a8a"></div>
<div class="a" style="left:383px;top:673px;width:320px;height:14px;border:1px solid #565656;background:#404040"></div>
<div class="a" style="left:992px;top:673px;width:14px;height:14px;border:1px solid #565656;background:#3d3d3d"></div>
<div style="position:absolute;left:997px;top:676px;width:0;height:0;border-top:4px solid transparent;border-bottom:4px solid transparent;border-left:5px solid #8a8a8a"></div>
<!-- status bar -->
<div class="a" style="left:15px;top:696px;width:15px;height:15px;border:1.5px solid #d8d8d8"></div>
<svg style="left:15px;top:696px" width="15" height="15"><circle cx="7.5" cy="7.5" r="4" fill="none" stroke="#d8d8d8" stroke-width="1.2" stroke-dasharray="1 1.1"/></svg>
<div class="txt" style="left:227px;top:696px;color:#d6d6d6;font-size:12.3px;letter-spacing:0.2px">RGB/透明度 (8 位整数/通道)&nbsp; sRGB built-in</div>
<div class="a" style="left:778px;top:691px;width:147px;height:24px;border:1px solid #3a3a3a;background:#474747"></div>
<div class="txt" style="left:782px;top:696px;color:#d6d6d6;font-size:12.8px">2,484 <u>x</u> 1,200 (29.6 MiB)</div>
<div class="a" style="left:932px;top:692px;width:23px;height:23px;border-radius:50%;background:#353535"></div>
<svg style="left:932px;top:692px" width="23" height="23"><path d="M11.5 2 V21" stroke="#555" stroke-width="1" stroke-dasharray="1.5 1.5"/><path d="M6 11.5 H17" stroke="#e0e0e0" stroke-width="1.2"/><circle cx="6" cy="11.5" r="1.5" fill="#e0e0e0"/><circle cx="17" cy="11.5" r="1.5" fill="#e0e0e0"/></svg>
<div class="txt" style="left:964px;top:697px;color:#d6d6d6">0.00°</div>
<div class="txt" style="left:1104px;top:697px;color:#d6d6d6">37.3%</div>
<div class="a" style="left:1157px;top:701px;width:82px;height:5px;border-radius:3px;background:#353535"></div>
<div class="a" style="left:1158px;top:702px;width:16px;height:3px;background:#6d8db0"></div>
<div class="a" style="left:1172px;top:697px;width:13px;height:13px;border-radius:3px;background:#4a4a4a;border:1px solid #2e2e2e"></div>
<svg style="left:1244px;top:697px" width="17" height="15"><path d="M1 1 H16 V10.5 H1 Z" fill="none" stroke="#dcdcdc" stroke-width="1.3"/><path d="M8.5 10.5 V13.5 M4 14 H13" stroke="#dcdcdc" stroke-width="1.3"/><rect x="7.5" y="4.8" width="2" height="2" fill="#dcdcdc"/></svg>
<svg style="left:1276px;top:706px" width="12" height="12" fill="#8a8a8a"><rect x="9" y="0" width="2" height="2"/><rect x="6" y="3" width="2" height="2"/><rect x="9" y="3" width="2" height="2"/><rect x="3" y="6" width="2" height="2"/><rect x="6" y="6" width="2" height="2"/><rect x="9" y="6" width="2" height="2"/><rect x="0" y="9" width="2" height="2"/><rect x="3" y="9" width="2" height="2"/><rect x="6" y="9" width="2" height="2"/><rect x="9" y="9" width="2" height="2"/></svg>
<!-- right docker -->
<div class="a" style="left:1027px;top:90px;width:90px;height:27px;background:#4a4a4a;border:1px solid #5a5a5a;border-bottom:none;border-radius:4px 4px 0 0;box-shadow:0 -1px 0 0 #353535,-1px 0 0 0 #3a3a3a,1px 0 0 0 #3a3a3a"></div>
<div class="a" style="left:1118px;top:92px;width:66px;height:24px;background:#434343;border:1px solid #575757;border-bottom:none;border-radius:4px 4px 0 0;box-shadow:0 -1px 0 0 #353535,1px 0 0 0 #3a3a3a"></div>
<div class="a" style="left:1117px;top:115px;width:171px;height:1px;background:#333"></div>
<div class="a" style="left:1117px;top:116px;width:171px;height:1px;background:#575757"></div>
<div class="txt" style="left:1038px;top:96px;color:#dedede;font-size:11px">多功能拾色器</div>
<div class="txt" style="left:1128px;top:96px;color:#dedede;font-size:11px">工具选项</div>
<svg style="left:0;top:0;pointer-events:none" width="1296" height="727">
 <defs>
  <g id="lock"><circle cx="0" cy="0" r="7.6" fill="none" stroke="#d6d6d6" stroke-width="1.1"/><path d="M-3.2 -0.5 V-2 A3.2 3.2 0 0 1 3.2 -2" fill="none" stroke="#d6d6d6" stroke-width="1.4"/><rect x="-4.6" y="0" width="9.2" height="4.6" fill="#d6d6d6"/></g>
  <g id="flt"><path d="M5 0.6 H13.4 V8 H9 M0.6 5 H8.4 V13.4 H0.6 Z M5 5 V0.6" fill="none" stroke="#dcdcdc" stroke-width="1.2"/><rect x="5" y="0" width="9" height="1.6" fill="#dcdcdc"/><rect x="0" y="4.4" width="9" height="1.6" fill="#dcdcdc"/></g>
  <g id="cls"><path d="M0.5 0.5 L10.5 10.5 M10.5 0.5 L0.5 10.5" stroke="#dcdcdc" stroke-width="1.3"/></g>
  <linearGradient id="ring" x1="0.8" y1="0.1" x2="0.2" y2="0.9"><stop offset="0" stop-color="#f4f4f4"/><stop offset="0.5" stop-color="#bdbdbd"/><stop offset="1" stop-color="#6a6a6a"/></linearGradient>
  <linearGradient id="tri" x1="0.2" y1="0" x2="0.8" y2="1"><stop offset="0" stop-color="#111"/><stop offset="0.5" stop-color="#777"/><stop offset="1" stop-color="#f4f4f4"/></linearGradient>
  <linearGradient id="bar2" x1="0" x2="1"><stop offset="0" stop-color="#000"/><stop offset="1" stop-color="#555"/></linearGradient>
  <linearGradient id="bar3" x1="0" x2="1"><stop offset="0" stop-color="#000"/><stop offset="1" stop-color="#808080"/></linearGradient>
 </defs>
 <!-- color selector docker -->
 <use href="#lock" x="1036" y="125"/>
 <use href="#flt" x="1249" y="118"/>
 <use href="#cls" x="1272.5" y="119.5"/>
 <path d="M1030.6 137.6 H1045.4 V152.4 H1030.6 Z M1030.6 140.6 H1045.4" fill="none" stroke="#d6d6d6" stroke-width="1.2"/>
 <rect x="1033.5" y="143" width="2.4" height="7" fill="#d6d6d6"/>
 <path d="M1037.5 143.8 H1043 M1037.5 146.5 H1043 M1037.5 149.2 H1043" stroke="#d6d6d6" stroke-width="1.1"/>
 <circle cx="1149" cy="157.5" r="21.2" fill="none" stroke="url(#ring)" stroke-width="3.6"/>
 <path d="M1149 142 L1164.3 166 H1134.2 Z" fill="url(#tri)"/>
 <path d="M1145.8 138.5 A3.2 3.2 0 0 0 1152.2 138.5" fill="#555" stroke="#e0e0e0" stroke-width="1.1"/>
 <rect x="1125.5" y="155.5" width="4" height="2" fill="#bbb"/>
 <circle cx="1279" cy="142" r="5.7" fill="none" stroke="#d6d6d6" stroke-width="1.3"/>
 <path d="M1275 138 L1283 146" stroke="#d6d6d6" stroke-width="1.3"/>
 <rect x="1271" y="150" width="16" height="16" fill="#000"/>
 <rect x="1027" y="181" width="244" height="10" fill="#000"/>
 <rect x="1027" y="192" width="244" height="10" fill="#000"/>
 <rect x="1155" y="192" width="116" height="10" fill="url(#bar2)"/>
 <rect x="1027" y="203" width="244" height="10" fill="#000"/>
 <rect x="1155" y="203" width="116" height="10" fill="url(#bar3)"/>
 <path d="M1144.7 181 V213 M1154.3 181 V213" stroke="#cfcfcf" stroke-width="1"/>
 <rect x="1027" y="191" width="244" height="1" fill="#555"/><rect x="1027" y="202" width="244" height="1" fill="#555"/>
 <path d="M1029.5 225 A5.5 5.5 0 0 1 1038.5 219.5 M1040.5 223 A5.5 5.5 0 0 1 1031.5 228.5" fill="none" stroke="#d6d6d6" stroke-width="1.5"/>
 <path d="M1028 223.5 L1031.5 224 L1029.5 227 Z M1042 224.5 L1038.5 224 L1040.5 221 Z" fill="#d6d6d6"/>
 <g fill="#8c8c8c"><rect x="1150" y="235" width="2" height="2"/><rect x="1153" y="235" width="2" height="2"/><rect x="1156" y="235" width="2" height="2"/><rect x="1159" y="235" width="2" height="2"/><rect x="1162" y="235" width="2" height="2"/><rect x="1165" y="235" width="2" height="2"/>
 <rect x="1150" y="447" width="2" height="2"/><rect x="1153" y="447" width="2" height="2"/><rect x="1156" y="447" width="2" height="2"/><rect x="1159" y="447" width="2" height="2"/><rect x="1162" y="447" width="2" height="2"/><rect x="1165" y="447" width="2" height="2"/>
 <rect x="1023" y="381" width="2" height="2"/><rect x="1023" y="384" width="2" height="2"/><rect x="1023" y="387" width="2" height="2"/><rect x="1023" y="390" width="2" height="2"/><rect x="1023" y="393" width="2" height="2"/><rect x="1023" y="396" width="2" height="2"/></g>
 <!-- layers docker -->
 <use href="#lock" x="1036" y="247"/>
 <use href="#flt" x="1249" y="240"/>
 <use href="#cls" x="1272.5" y="241.5"/>
 <path d="M1264.5 263.5 H1277.5 L1272.5 270.5 V280 L1269.5 278 V270.5 Z" fill="none" stroke="#dcdcdc" stroke-width="1.2" stroke-linejoin="round"/>
 <path d="M1279 282 H1285 L1282 285 Z M1279 314 H1285 L1282 317 Z" fill="#9a9a9a"/>
 <path d="M1265 301 H1277 M1265 305 H1277 M1265 309 H1277" stroke="#e0e0e0" stroke-width="1.6"/>
 <!-- brush presets docker -->
 <use href="#lock" x="1036" y="459"/>
 <use href="#flt" x="1249" y="452"/>
 <use href="#cls" x="1272.5" y="453.5"/>
 <path d="M1245 476 H1257 M1245 480 H1257 M1245 484 H1257" stroke="#e0e0e0" stroke-width="1.6"/>
 <rect x="1267.6" y="472.6" width="15" height="15" fill="none" stroke="#dcdcdc" stroke-width="1.2"/>
 <path d="M1275 474 V480" stroke="#dcdcdc" stroke-width="1" stroke-dasharray="1 1"/>
</svg>
<div class="txt" style="left:1050px;top:118px;color:#dedede;font-size:11px">多功能拾色器</div>
<div class="txt" style="left:1050px;top:240px;color:#dedede;font-size:11px">图层</div>
<div class="combo" style="left:1028px;top:257px;width:225px;height:30px"></div>
<div class="txt" style="left:1032px;top:264px;color:#dedede;font-size:11px">正常</div>
<div class="tri" style="left:1238px;top:270px"></div>
<div class="a" style="left:1028px;top:291px;width:225px;height:28px;border:1px solid #2e2e2e;border-radius:3px;background:#434343;overflow:hidden">
 <div class="a" style="left:0;top:0;width:211px;height:26px;background:#56708e"></div>
</div>
<div class="triu" style="left:1242px;top:296px;border-bottom-color:#8a8a8a"></div>
<div class="tri" style="left:1242px;top:308px;border-top-color:#8a8a8a"></div>
<div class="txt" style="left:1093px;top:298px;color:#e6e6e6;font-size:11px">不透明度:&nbsp;100%</div>
<!-- layer list -->
<div class="a" style="left:1027px;top:322px;width:260px;height:92px;background:#393939"></div>
<div class="a" style="left:1050px;top:323px;width:236px;height:26px;background:#56708e"></div>
<div class="a" style="left:1027px;top:349px;width:260px;height:1px;background:#363636"></div>
<div class="a" style="left:1027px;top:376px;width:260px;height:1px;background:#363636"></div>
<div class="a" style="left:1027px;top:403px;width:260px;height:1px;background:#363636"></div>
<svg style="left:1027px;top:322px" width="260" height="92">
 <defs>
  <g id="eye"><path d="M-7 0.5 C-5 -4 3 -5.5 7 -1 M-7 1 C-4 5.5 4 5.5 7 1.5" fill="none" stroke="#c8c8c8" stroke-width="1"/><circle cx="0.6" cy="-0.3" r="3.6" fill="#dadada"/></g>
  <g id="lck"><path d="M6.5 0 A4 4 0 0 1 10 3 V6" fill="none" stroke="#777" stroke-width="1.4"/><rect x="0" y="6" width="12" height="8" fill="#777"/></g>
  <pattern id="chk" width="8" height="8" patternUnits="userSpaceOnUse"><rect width="8" height="8" fill="#fff"/><rect width="4" height="4" fill="#e6e6e6"/><rect x="4" y="4" width="4" height="4" fill="#e6e6e6"/></pattern>
 </defs>
 <use href="#eye" x="12" y="14"/><use href="#eye" x="12" y="41"/><use href="#eye" x="12" y="68"/>
 <rect x="26.5" y="4.5" width="21" height="21" fill="#fff" stroke="#333" stroke-width="1"/>
 <circle cx="37" cy="15" r="6.5" fill="none" stroke="#222" stroke-width="1" stroke-dasharray="1.3 1"/>
 <path d="M34 13 h1 M39 12.5 h1 M34.5 17.5 H40" stroke="#222" stroke-width="1"/>
 <rect x="27" y="32" width="20" height="20" fill="url(#chk)"/>
 <rect x="27" y="64" width="20" height="10" fill="#fff"/>
 <g fill="none" stroke="#e8e8e8" stroke-width="1.1">
  <path d="M55.5 3.5 H64.5 V12.5 H59.5 M55.5 3.5 L62.5 10.5"/>
  <path d="M55.5 30.5 H64.5 V39.5 H59.5 M55.5 30.5 L62.5 37.5"/>
  <path d="M55.5 57.5 H64.5 V66.5 H59.5 M55.5 57.5 L62.5 64.5"/>
 </g>
 <use href="#lck" x="205" y="7"/><use href="#lck" x="205" y="34"/><use href="#lck" x="205" y="61"/>
 <g fill="#7e8fa3"><rect x="205" y="13" width="12" height="8"/></g>
 <path d="M211.5 7 A4 4 0 0 1 215 10 V13" fill="none" stroke="#7e8fa3" stroke-width="1.4"/>
 <g font-family="Liberation Sans,sans-serif" font-style="italic" font-size="19" fill="#7a7a7a"><text x="221" y="20" fill="#8296ad">α</text><text x="221" y="47">α</text><text x="221" y="74">α</text></g>
 <g>
  <rect x="240.5" y="6.5" width="16" height="16" fill="#6f8198"/>
  <rect x="240.5" y="6.5" width="5.3" height="5.3" fill="#56708e"/><rect x="251.2" y="6.5" width="5.3" height="5.3" fill="#56708e"/><rect x="245.8" y="11.8" width="5.4" height="5.4" fill="#56708e"/><rect x="240.5" y="17.2" width="5.3" height="5.3" fill="#56708e"/><rect x="251.2" y="17.2" width="5.3" height="5.3" fill="#56708e"/>
  <rect x="240.5" y="33.5" width="16" height="16" fill="#555"/>
  <rect x="245.8" y="33.5" width="5.4" height="5.3" fill="#6e6e6e"/><rect x="240.5" y="38.8" width="5.3" height="5.4" fill="#6e6e6e"/><rect x="251.2" y="38.8" width="5.3" height="5.4" fill="#6e6e6e"/><rect x="245.8" y="44.2" width="5.4" height="5.3" fill="#6e6e6e"/>
  <rect x="240.5" y="60.5" width="16" height="16" fill="#555"/>
  <rect x="245.8" y="60.5" width="5.4" height="5.3" fill="#6e6e6e"/><rect x="240.5" y="65.8" width="5.3" height="5.4" fill="#6e6e6e"/><rect x="251.2" y="65.8" width="5.3" height="5.4" fill="#6e6e6e"/><rect x="245.8" y="71.2" width="5.4" height="5.3" fill="#6e6e6e"/>
 </g>
</svg>
<div class="txt" style="left:1094px;top:330px;color:#cfcfcf;font-weight:bold;font-size:11.5px">g.jpg</div>
<div class="txt" style="left:1094px;top:356px;color:#dedede;font-size:11.5px">Layer 2</div>
<div class="txt" style="left:1094px;top:383px;color:#dedede;font-size:11.5px">Layer 1</div>
<!-- layer buttons -->
<svg style="left:1027px;top:418px" width="260" height="24">
 <path d="M6 12 H24 M15 3.5 V20.5" stroke="#dcdcdc" stroke-width="2"/>
 <path d="M32 11 H40 L36 15 Z M172 11 H180 L176 15 Z" fill="#9a9a9a"/>
 <path d="M54 8 V21 H67 M57.5 4.5 H69 V17 H57.5 Z" fill="none" stroke="#dcdcdc" stroke-width="1.8"/>
 <path d="M81 7 L91 17 L101 7" fill="none" stroke="#dcdcdc" stroke-width="2"/>
 <path d="M113 17 L123 7 L133 17" fill="none" stroke="#dcdcdc" stroke-width="2"/>
 <path d="M145 5 H165 M145 12 H165 M145 19 H165" stroke="#dcdcdc" stroke-width="1.6"/>
 <path d="M159 3 V7 M150 10 V14 M157 17 V21" stroke="#dcdcdc" stroke-width="2.5"/>
 <path d="M236.5 5 H254.5 M241 5 A4 3 0 0 1 250 5" fill="none" stroke="#dcdcdc" stroke-width="1.8"/>
 <path d="M238 8 H253 L252 21 C252 21.5 251.5 22 251 22 H240 C239.5 22 239 21.5 239 21 Z" fill="#dcdcdc"/>
</svg>
<div class="txt" style="left:1050px;top:452px;color:#dedede;font-size:11px">笔刷预设</div>
<div class="combo" style="left:1028px;top:469px;width:154px;height:23px"></div>
<div class="txt" style="left:1032px;top:472px;color:#dedede;font-size:11px">全部</div>
<div class="tri" style="left:1167px;top:478px"></div>
<div class="combo" style="left:1184px;top:469px;width:55px;height:23px"></div>
<div class="txt" style="left:1203px;top:472px;color:#dedede;font-size:11px">标签</div>
<div class="a" style="left:1231px;top:486px;width:0;height:0;border-left:3px solid transparent;border-right:3px solid transparent;border-top:3px solid #9a9a9a"></div>
<svg style="left:1184px;top:469px" width="24" height="23"><path d="M5.6 3.5 H15.4 V19 L10.5 14.5 L5.6 19 Z" fill="none" stroke="#dcdcdc" stroke-width="1.4"/></svg>
<!-- brush preset grid -->
<div class="a" style="left:1027px;top:493px;width:243px;height:169px;background:#2f2f2f;overflow:hidden">
<svg style="left:0;top:0" width="243" height="169" viewBox="1027 493 243 169">
 <defs>
  <pattern id="chk2" width="6" height="6" patternUnits="userSpaceOnUse"><rect width="6" height="6" fill="#f4f4f4"/><rect width="3" height="3" fill="#9a9a9a"/><rect x="3" y="3" width="3" height="3" fill="#9a9a9a"/></pattern>
  <linearGradient id="gBlack" x1="0" y1="0" x2="0" y2="1"><stop offset="0" stop-color="#666"/><stop offset="0.35" stop-color="#222"/><stop offset="1" stop-color="#000"/></linearGradient>
  <linearGradient id="gSilver" x1="0" y1="0" x2="0" y2="1"><stop offset="0" stop-color="#fff"/><stop offset="0.4" stop-color="#d8d8d8"/><stop offset="1" stop-color="#7a7a7a"/></linearGradient>
  <linearGradient id="gGray" x1="0" y1="0" x2="0" y2="1"><stop offset="0" stop-color="#c0c0c0"/><stop offset="0.4" stop-color="#8a8a8a"/><stop offset="1" stop-color="#505050"/></linearGradient>
  <linearGradient id="gBlue" x1="0" y1="0" x2="0" y2="1"><stop offset="0" stop-color="#8ab0ff"/><stop offset="0.4" stop-color="#3a64d8"/><stop offset="1" stop-color="#1a3090"/></linearGradient>
  <linearGradient id="gPencil" x1="0" y1="0" x2="0" y2="1"><stop offset="0" stop-color="#70c0f0"/><stop offset="0.45" stop-color="#2a88d0"/><stop offset="1" stop-color="#145890"/></linearGradient>
  <linearGradient id="gOrange" x1="0" y1="0" x2="0" y2="1"><stop offset="0" stop-color="#ffb060"/><stop offset="0.5" stop-color="#e07a18"/><stop offset="1" stop-color="#a04a08"/></linearGradient>
  <linearGradient id="gFerr" x1="0" y1="0" x2="0" y2="1"><stop offset="0" stop-color="#ffffff"/><stop offset="0.5" stop-color="#d8c8ec"/><stop offset="1" stop-color="#7a6a8a"/></linearGradient>
  <linearGradient id="gFerrB" x1="0" y1="0" x2="0" y2="1"><stop offset="0" stop-color="#e0f0ff"/><stop offset="0.5" stop-color="#a0b8f0"/><stop offset="1" stop-color="#50608a"/></linearGradient>
  <linearGradient id="sgrad" x1="0" x2="1"><stop offset="0" stop-color="#d0d0d0"/><stop offset="1" stop-color="#202020"/></linearGradient>
  <linearGradient id="sgrad2" x1="0" x2="1"><stop offset="0" stop-color="#a0a0a0"/><stop offset="1" stop-color="#2a2a2a"/></linearGradient>
  <linearGradient id="sgrad3" x1="0" x2="1"><stop offset="0" stop-color="#c8c8c8"/><stop offset="1" stop-color="#111"/></linearGradient>
  <linearGradient id="sblue" x1="0" x2="1"><stop offset="0" stop-color="#80b2d2"/><stop offset="1" stop-color="#1c2848"/></linearGradient>
  <linearGradient id="fadeR" x1="0" x2="1"><stop offset="0" stop-color="#fff"/><stop offset="0.6" stop-color="#fff" stop-opacity="0.9"/><stop offset="1" stop-color="#fff" stop-opacity="0.15"/></linearGradient>
  <mask id="mFade" maskUnits="userSpaceOnUse" x="1029" y="494" width="58" height="46"><rect x="1029" y="494" width="58" height="46" fill="url(#fadeR)"/></mask>
  <radialGradient id="air"><stop offset="0" stop-color="#2e2e2e"/><stop offset="0.45" stop-color="#3e3e3e"/><stop offset="1" stop-color="#d0d0d0" stop-opacity="0"/></radialGradient>
  <filter id="blur1" x="-20%" y="-50%" width="140%" height="200%"><feGaussianBlur stdDeviation="1.3"/></filter>
<clipPath id="c11"><rect x="1029" y="494" width="58" height="46"/></clipPath><clipPath id="c12"><rect x="1089" y="494" width="58" height="46"/></clipPath><clipPath id="c13"><rect x="1149" y="494" width="58" height="46"/></clipPath><clipPath id="c14"><rect x="1209" y="494" width="58" height="46"/></clipPath><clipPath id="c21"><rect x="1029" y="542" width="58" height="58"/></clipPath><clipPath id="c22"><rect x="1089" y="542" width="58" height="58"/></clipPath><clipPath id="c23"><rect x="1149" y="542" width="58" height="58"/></clipPath><clipPath id="c24"><rect x="1209" y="542" width="58" height="58"/></clipPath><clipPath id="c31"><rect x="1029" y="602" width="58" height="58"/></clipPath><clipPath id="c32"><rect x="1092" y="605" width="52" height="52"/></clipPath><clipPath id="c33"><rect x="1149" y="602" width="58" height="58"/></clipPath><clipPath id="c34"><rect x="1209" y="602" width="58" height="58"/></clipPath></defs>
 <g fill="#d0d0d0"><rect x="1029" y="494" width="58" height="46"/><rect x="1089" y="494" width="58" height="46"/><rect x="1149" y="494" width="58" height="46"/><rect x="1209" y="494" width="58" height="46"/><rect x="1029" y="542" width="58" height="58"/><rect x="1089" y="542" width="58" height="58"/><rect x="1149" y="542" width="58" height="58"/><rect x="1209" y="542" width="58" height="58"/><rect x="1029" y="602" width="58" height="58"/><rect x="1149" y="602" width="58" height="58"/><rect x="1209" y="602" width="58" height="58"/></g><rect x="1088" y="601" width="60" height="60" fill="#56708e"/><rect x="1092" y="605" width="52" height="52" fill="#80b2d2"/><g clip-path="url(#c11)"><path d="M1046 510 C1038 522 1046 536 1060 534 C1070 532 1078 526 1086 522" fill="none" stroke="url(#chk2)" stroke-width="11" mask="url(#mFade)"/><path d="M1064 494 L1090 494 L1090 503 L1068 521 L1058 508 Z" fill="#2c4e8c"/><path d="M1048 502 L1060 494 L1070 508 L1062 522 Z" fill="#f6f6f6"/><path d="M1062 522 L1070 508 L1072 512 L1064 525 Z" fill="#b8b8b8"/></g><g clip-path="url(#c12)"><path d="M1110 519 C1106 530 1114 536 1122 533 C1128 530 1132 526 1135 522" fill="none" stroke="url(#chk2)" stroke-width="5"/><g transform="translate(1112,512) rotate(-38)"><path d="M0 -3.0 L8 -3.0 L8 3.0 L0 3.0 Z" fill="#e6e6e6" stroke="#999" stroke-width="0.6"/><path d="M8 -5.0 L53 -5.0 L53 5.0 L8 5.0 Z" fill="url(#gBlue)"/></g></g><g clip-path="url(#c13)"><path d="M1157 520 C1167 526 1182 528 1194 530" fill="none" stroke="url(#chk2)" stroke-width="9" opacity="0.75" filter="url(#blur1)"/><path d="M1175 521 C1169 516 1170 502 1177 494 L1207 494 L1207 505 C1201 512 1190 521 1181 522 C1178.5 522.5 1176.5 522 1175 521 Z" fill="#7a7f87"/></g><g clip-path="url(#c14)"><circle cx="1221" cy="531" r="25" fill="url(#air)"/><g transform="translate(1237,514) rotate(-38)"><path d="M0 0.0 L10 -4.0 L10 4.0 L0 0.0 Z" fill="url(#gSilver)" stroke="#777" stroke-width="0.6"/><path d="M10 -4.0 L16 -4.0 L16 4.0 L10 4.0 Z" fill="#111"/><path d="M16 -4.0 L46 -4.0 L46 4.0 L16 4.0 Z" fill="url(#gSilver)"/></g></g><g clip-path="url(#c21)"><path d="M1049 588 C1060 589 1075 585 1090 578" fill="none" stroke="#1e1e1e" stroke-width="7" stroke-linecap="round"/><g transform="translate(1052,578) rotate(-45)"><path d="M0 0.0 L14 -4.0 L14 4.0 L0 0.0 Z" fill="url(#gSilver)" stroke="#555" stroke-width="0.6"/><path d="M14 -4.5 L59 -4.5 L59 4.5 L14 4.5 Z" fill="url(#gBlack)"/></g></g><g clip-path="url(#c22)"><path d="M1108 580 C1110 590 1125 591 1150 578" fill="none" stroke="url(#sgrad)" stroke-width="5" stroke-linecap="round"/><g transform="translate(1111,578) rotate(-45)"><path d="M0 0.0 L16 -5.0 L16 5.0 L0 0.0 Z" fill="url(#gBlack)" stroke="#111" stroke-width="0.6"/><path d="M16 -5.0 L61 -5.0 L61 5.0 L16 5.0 Z" fill="url(#gBlack)"/></g></g><g clip-path="url(#c23)"><path d="M1164 585 C1170 593 1180 586 1188 585 C1196 584 1201 585 1207 584" fill="none" stroke="url(#sgrad2)" stroke-width="7" stroke-linecap="round" filter="url(#blur1)"/><g transform="translate(1172,578) rotate(-45)"><path d="M0 0.0 L12 -4.0 L12 4.0 L0 0.0 Z" fill="url(#gSilver)" stroke="#777" stroke-width="0.6"/><path d="M12 -4.0 L13.5 -4.0 L13.5 4.0 L12 4.0 Z" fill="#c86a20"/><path d="M13.5 -4.5 L58.5 -4.5 L58.5 4.5 L13.5 4.5 Z" fill="url(#gSilver)"/></g></g><g clip-path="url(#c24)"><path d="M1225 586 C1232 593 1242 584 1250 588 C1258 592 1262 589 1268 586" fill="none" stroke="#999" stroke-width="7" stroke-linecap="round" filter="url(#blur1)"/><g transform="translate(1231,578) rotate(-45)"><path d="M0 0.0 L12 -4.0 L12 4.0 L0 0.0 Z" fill="url(#gSilver)" stroke="#777" stroke-width="0.6"/><path d="M12 -5.0 L57 -5.0 L57 5.0 L12 5.0 Z" fill="url(#gGray)"/></g></g><g clip-path="url(#c31)"><path d="M1050 641 C1046 650 1054 653 1062 648 C1065 654 1070 656 1090 645" fill="none" stroke="#2c2c2c" stroke-width="5" stroke-linecap="round"/><g transform="translate(1050,637) rotate(-40)"><path d="M0 0.0 L14 -3.5 L14 3.5 L0 0.0 Z" fill="#3a1a1a"/><path d="M14 -2.5 L28 -2.5 L28 2.5 L14 2.5 Z" fill="url(#gFerr)" stroke="#555" stroke-width="0.6"/><path d="M28 -3.0 L68 -3.0 L68 3.0 L28 3.0 Z" fill="#5a5a5a"/></g></g><g clip-path="url(#c32)"><path d="M1110 645 C1107 653 1116 654 1124 650 C1127 656 1132 658 1146 648" fill="none" stroke="url(#sblue)" stroke-width="5" stroke-linecap="round"/><g transform="translate(1110,637) rotate(-40)"><path d="M0 0.0 L14 -3.5 L14 3.5 L0 0.0 Z" fill="#2a2a46"/><path d="M14 -2.5 L30 -2.5 L30 2.5 L14 2.5 Z" fill="url(#gFerrB)" stroke="#3a4a6a" stroke-width="0.6"/><path d="M30 -3.0 L70 -3.0 L70 3.0 L30 3.0 Z" fill="#b0a040"/></g><path d="M1096 623 L1103.5 615.5 L1107.5 619.5 L1100 627 H1096 Z" fill="none" stroke="#1c3050" stroke-width="1.6"/><path d="M1101.5 617.5 L1105.5 621.5" stroke="#1c3050" stroke-width="2.5"/></g><g clip-path="url(#c33)"><path d="M1166 657 C1162 652 1170 644 1173 647 C1176 656 1181 658 1190 652 C1198 648 1203 644 1208 640" fill="none" stroke="url(#sgrad3)" stroke-width="1.6"/><g transform="translate(1173,636) rotate(-42)"><path d="M0 0.0 L9 -2.0 L9 2.0 L0 0.0 Z" fill="#5a2a2a"/><path d="M9 -2.0 L20 -2.0 L20 2.0 L9 2.0 Z" fill="url(#gFerr)" stroke="#666" stroke-width="0.6"/><path d="M20 -3.0 L60 -3.0 L60 3.0 L20 3.0 Z" fill="url(#gOrange)"/></g></g><g clip-path="url(#c34)"><path d="M1232 652 C1245 660 1258 654 1267 640" fill="none" stroke="#888" stroke-width="6" stroke-dasharray="1.2 1.3" filter="url(#blur1)" opacity="0.9"/><circle cx="1226" cy="645" r="2.6" fill="#222"/><path d="M1224 648 L1230 652" stroke="#555" stroke-width="3"/><g transform="translate(1232,637) rotate(-40)"><path d="M0 0.0 L7 -2.5 L7 2.5 L0 0.0 Z" fill="#333"/><path d="M7 -2.5 L17 -6.5 L17 6.5 L7 2.5 Z" fill="#d8b080"/><path d="M17 -6.5 L62 -6.5 L62 6.5 L17 6.5 Z" fill="url(#gPencil)"/></g></g>
</svg>
</div>
<!-- preset scrollbar -->
<div class="a" style="left:1273px;top:494px;width:13px;height:167px;background:#3b3b3b"></div>
<div class="a" style="left:1273px;top:494px;width:13px;height:13px;border:1px solid #565656;background:#3d3d3d"></div>
<div class="triu" style="left:1275px;top:498px;border-bottom-color:#8a8a8a"></div>
<div class="a" style="left:1273px;top:509px;width:13px;height:27px;border:1px solid #565656;background:#404040"></div>
<div class="a" style="left:1273px;top:648px;width:13px;height:13px;border:1px solid #565656;background:#3d3d3d"></div>
<div class="tri" style="left:1275px;top:652px;border-top-color:#8a8a8a"></div>
<!-- search -->
<div class="a" style="left:1027px;top:663px;width:130px;height:23px;border-radius:4px;background:#3a3a3a"></div>
<div class="txt" style="left:1030px;top:666px;color:#8a8a8a;font-size:11px">搜索</div>
<div class="a" style="left:1163px;top:667px;width:14px;height:14px;background:#3a3a3a;border-radius:2px"></div>
<svg style="left:1163px;top:667px" width="14" height="14"><path d="M3.5 7 L6 10.5 L10.5 2.5" fill="none" stroke="#dcdcdc" stroke-width="1.4"/></svg>
<div class="txt" style="left:1182px;top:666px;color:#dedede;font-size:11px">仅在当前标签内搜索</div>
</body></html>
